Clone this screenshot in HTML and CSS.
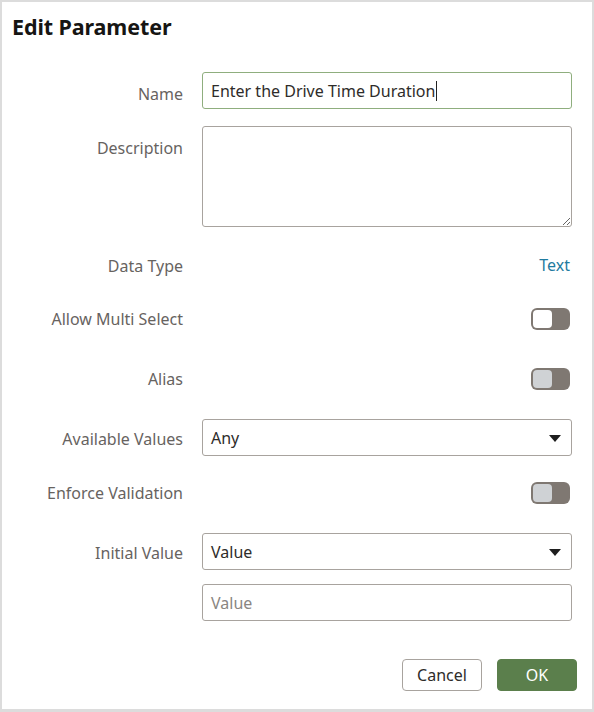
FILE: index.html
```html
<!DOCTYPE html>
<html lang="en">
<head>
<meta charset="utf-8">
<title>Edit Parameter</title>
<link rel="stylesheet" href="styles.css">
</head>
<body>
<div class="dialog">
  <h1 class="title">Edit Parameter</h1>
  <div class="form">
    <div class="row row-top">
      <div class="label">Name</div>
      <div class="control">
        <div class="field focus"><span class="val">Enter the Drive Time Duration</span><span class="caret"></span></div>
      </div>
    </div>
    <div class="row row-top row-desc">
      <div class="label">Description</div>
      <div class="control">
        <textarea class="area"></textarea>
      </div>
    </div>
    <div class="row row-text">
      <div class="label">Data Type</div>
      <div class="control control-end">
        <a class="link">Text</a>
      </div>
    </div>
    <div class="row row-switch">
      <div class="label">Allow Multi Select</div>
      <div class="control control-end">
        <span class="switch"><span class="knob knob-white"></span></span>
      </div>
    </div>
    <div class="row row-switch">
      <div class="label">Alias</div>
      <div class="control control-end">
        <span class="switch"><span class="knob"></span></span>
      </div>
    </div>
    <div class="row">
      <div class="label">Available Values</div>
      <div class="control">
        <div class="field select"><span class="val">Any</span><span class="arrow"></span></div>
      </div>
    </div>
    <div class="row row-switch">
      <div class="label">Enforce Validation</div>
      <div class="control control-end">
        <span class="switch"><span class="knob"></span></span>
      </div>
    </div>
    <div class="row row-last">
      <div class="label">Initial Value</div>
      <div class="control control-stack">
        <div class="field select"><span class="val">Value</span><span class="arrow"></span></div>
        <div class="field"><span class="placeholder">Value</span></div>
      </div>
    </div>
  </div>
  <div class="buttons">
    <button class="btn btn-cancel">Cancel</button>
    <button class="btn btn-ok">OK</button>
  </div>
</div>
</body>
</html>
```
FILE: styles.css
```css
* { box-sizing: border-box; }
html, body { margin: 0; padding: 0; background: #ffffff; }
body { font-family: "Noto Sans", "Open Sans", sans-serif; color: #333333; }

.dialog {
  width: 594px;
  height: 712px;
  border: 2px solid #dcdcdc;
  border-bottom-width: 3px;
  padding: 0 20px 0 10px;
  background: #ffffff;
}

.title {
  margin: 0;
  padding-top: 11px;
  font-size: 21.5px;
  line-height: 28px;
  font-weight: 700;
  color: #161513;
  letter-spacing: -0.1px;
}

.form { margin-top: 31px; }

.row {
  display: flex;
  gap: 19px;
  margin-bottom: 17px;
}
.row-desc { margin-bottom: 19px; }
.row-text { min-height: 36px; }
.row-switch { min-height: 43px; }
.row-last { margin-bottom: 0; }

.label {
  width: 171px;
  flex: none;
  text-align: right;
  font-size: 16px;
  line-height: 20px;
  padding-top: 10px;
  color: #67635f;
}
.row-top .label { padding-top: 12px; }

.control { flex: 1; }
.control-end { display: flex; justify-content: flex-end; align-items: flex-start; }
.control-stack { display: flex; flex-direction: column; gap: 14px; }

.field {
  height: 37px;
  border: 1px solid #a8a39e;
  border-radius: 3px;
  display: flex;
  align-items: center;
  padding: 0 10px 0 8px;
  font-size: 16px;
  color: #2e2c2a;
}
.field.focus { border-color: #8fae7e; }
.caret {
  display: inline-block;
  width: 1px;
  height: 20px;
  background: #222;
  margin-left: 1px;
}
.select { justify-content: space-between; }
.arrow {
  width: 0;
  height: 0;
  border-left: 6px solid transparent;
  border-right: 6px solid transparent;
  border-top: 7px solid #1e1e1e;
  margin-top: 1px;
}
.placeholder { color: #8a8682; }

.area {
  display: block;
  width: 100%;
  height: 101px;
  border: 1px solid #a8a39e;
  border-radius: 3px;
  resize: vertical;
  font-family: inherit;
  font-size: 16px;
  margin: 0;
}

.link {
  font-size: 16px;
  line-height: 20px;
  padding-top: 9px;
  color: #1f7ba0;
  margin-right: 2px;
}

.switch {
  margin-top: 9px;
  width: 39px;
  height: 22px;
  border-radius: 6px;
  background: #7f7872;
  padding: 2px;
  display: inline-flex;
  margin-right: 2px;
}
.knob {
  width: 19px;
  height: 18px;
  border-radius: 4px;
  background: #cfd2d5;
}
.knob-white { background: #ffffff; }

.buttons {
  display: flex;
  justify-content: flex-end;
  gap: 15px;
  margin-top: 38px;
  margin-right: -5px;
}
.btn {
  width: 80px;
  height: 32px;
  border-radius: 4px;
  font-family: inherit;
  font-size: 16px;
  cursor: pointer;
}
.btn-cancel {
  background: #ffffff;
  border: 1px solid #a8a39e;
  color: #2e2c2a;
}
.btn-ok {
  background: #5b7f4c;
  border: 1px solid #5b7f4c;
  color: #ffffff;
}
```
